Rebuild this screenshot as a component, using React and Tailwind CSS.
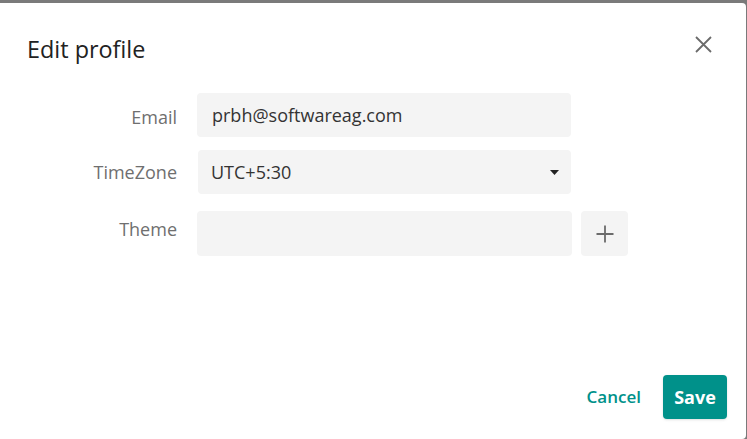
import React from 'react';

const CloseIcon = () => (
    <svg width="17" height="17" viewBox="0 0 17 17" fill="none">
        <path d="M1 1L16 16M16 1L1 16" stroke="#6b6b6b" strokeWidth="1.8" />
    </svg>
);

const PlusIcon = () => (
    <svg width="18" height="18" viewBox="0 0 18 18" fill="none">
        <path d="M9 0.5V17.5M0.5 9H17.5" stroke="#6b6b6b" strokeWidth="1.8" />
    </svg>
);

const Caret = () => (
    <svg width="9" height="5" viewBox="0 0 9 5">
        <path d="M0 0H9L4.5 5Z" fill="#222" />
    </svg>
);

const App = () => {
    return (
        <div className="h-[439px] w-[747px] bg-[#7a7a7a] pt-[3px] overflow-hidden font-['Open_Sans',sans-serif]">
            <div className="w-[746px] h-[436px] bg-white rounded-r-[4px] flex flex-col">
                {/* header */}
                <div className="flex items-start justify-between pl-[27px] pr-[34px] pt-[30px]">
                    <h1 className="text-[23.4px] leading-[32px] text-[#222]">Edit profile</h1>
                    <button className="mt-[3px]">
                        <CloseIcon />
                    </button>
                </div>

                {/* form */}
                <div className="mt-[28px] flex flex-col">
                    <div className="flex">
                        <label className="w-[177px] text-right text-[18px] leading-[24px] text-[#6f6f6f] mt-[12px]">Email</label>
                        <div className="ml-[20px] w-[374px] h-[44px] bg-[#f4f4f4] rounded-[4px] flex items-center pl-[15px] text-[18px] text-[#333]">
                            prbh@softwareag.com
                        </div>
                    </div>

                    <div className="flex mt-[13px]">
                        <label className="w-[177px] text-right text-[18px] leading-[24px] text-[#6f6f6f] mt-[10px]">TimeZone</label>
                        <div className="ml-[21px] w-[373px] h-[44px] bg-[#f4f4f4] rounded-[4px] flex items-center justify-between pl-[13px] pr-[12px] text-[18px] text-[#333]">
                            <span>UTC+5:30</span>
                            <Caret />
                        </div>
                    </div>

                    <div className="flex mt-[17px]">
                        <label className="w-[177px] text-right text-[18px] leading-[24px] text-[#6f6f6f] mt-[6px]">Theme</label>
                        <div className="ml-[20px] w-[375px] h-[45px] bg-[#f4f4f4] rounded-[4px]" />
                        <button className="ml-[9px] w-[47px] h-[45px] bg-[#f4f4f4] rounded-[4px] flex items-center justify-center">
                            <PlusIcon />
                        </button>
                    </div>
                </div>

                {/* footer */}
                <div className="mt-auto flex items-center justify-end pr-[19px] pb-[20px]">
                    <button className="text-[17px] font-semibold text-[#00918a]">Cancel</button>
                    <button className="ml-[22px] h-[44px] w-[64px] bg-[#00918a] rounded-[4px] text-white text-[18px] font-bold shadow-sm">Save</button>
                </div>
            </div>
        </div>
    );
};

export default App;
